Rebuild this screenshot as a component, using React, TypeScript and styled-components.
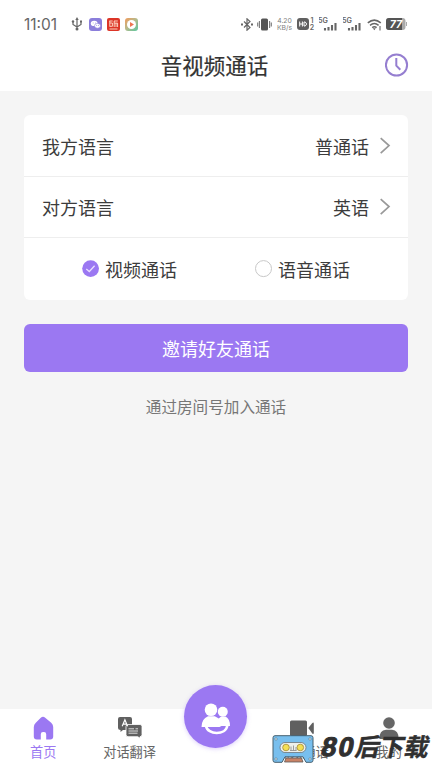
import React from "react";
import styled, { createGlobalStyle } from "styled-components";

const PURPLE = "#9b78f2";

const GlobalStyle = createGlobalStyle`
  * { box-sizing: border-box; }
  body { margin: 0; background: #f5f5f5; }
  button { font: inherit; border: 0; padding: 0; background: none; color: inherit; }
`;

const Screen = styled.div`
  width: 432px;
  height: 768px;
  overflow: hidden;
  display: flex;
  flex-direction: column;
  background: #f5f5f5;
  color: #3c3c3c;
  font-family: "Noto Sans CJK SC", sans-serif;
`;

const StatusBar = styled.div`
  height: 48px;
  padding: 0 25px 0 24px;
  display: flex;
  align-items: center;
  background: #fff;
  color: #666;
  font-family: Inter, sans-serif;
`;

const Time = styled.span`
  width: 47px;
  font-size: 15.5px;
  line-height: 22px;
  padding-top: 1px;
`;

const StatusIcons = styled.div`
  display: flex;
  align-items: center;
  gap: 5px;
  svg { display: block; }
  svg:first-child { margin-right: 1px; }
`;

const SignalIcons = styled.div`
  margin-left: auto;
  display: flex;
  align-items: center;
  gap: 4px;
  svg { display: block; flex: none; }
`;

const Speed = styled.div`
  width: 17px;
  display: grid;
  grid-template-rows: 7px 7px;
  justify-items: center;
  font-size: 6.8px;
  line-height: 7px;
  white-space: nowrap;
  color: #808080;
`;

const Header = styled.header`
  height: 43px;
  padding: 0 23px;
  display: grid;
  grid-template-columns: 24px 1fr 24px;
  align-items: start;
  background: #fff;
  svg { display: block; margin-top: 5px; }
`;

const Title = styled.h1`
  grid-column: 2;
  margin: 0;
  padding-right: 3px;
  text-align: center;
  font-size: 21.5px;
  line-height: 34px;
  font-weight: 400;
  -webkit-text-stroke: 0.2px #333;
  color: #333;
`;

const Content = styled.main`
  flex: 1;
  padding: 24px 24px 0;
  display: flex;
  flex-direction: column;
`;

const Card = styled.section`
  height: 185px;
  border-radius: 6px;
  background: #fff;
`;

const Row = styled.div`
  height: 61.5px;
  padding: 1px 16px 0 18px;
  display: flex;
  align-items: center;
  border-bottom: 1px solid #eee;
  font-size: 18px;
  line-height: 28px;
  svg { display: block; margin-left: 9px; }
`;

const RowLabel = styled.span`
  flex: 1;
`;

const Choices = styled.div`
  height: 61px;
  padding: 1px 0 0 58px;
  display: flex;
  align-items: center;
  font-size: 18px;
  line-height: 28px;
`;

const Choice = styled.label`
  flex: none;
  width: 173px;
  display: flex;
  align-items: center;
  gap: 6px;
  svg { display: block; }
`;

const Invite = styled.button`
  flex: none;
  height: 48px;
  margin-top: 23.5px;
  border-radius: 6px;
  background: ${PURPLE};
  color: #fff;
  font-size: 18px;
  line-height: 46px;
`;

const JoinLink = styled.button`
  margin-top: 22px;
  align-self: center;
  color: #777;
  font-size: 15.6px;
  line-height: 24px;
`;

const TabBar = styled.nav`
  position: relative;
  height: 59px;
  display: grid;
  grid-template-columns: repeat(5, 1fr);
  background: #fff;
`;

const Tab = styled.div<{ $active?: boolean }>`
  padding-top: 7px;
  display: flex;
  flex-direction: column;
  align-items: center;
  color: ${(p) => (p.$active ? PURPLE : "#666")};
  font-size: 13.2px;
  line-height: 20px;
  white-space: nowrap;
  svg { display: block; height: 25px; margin-bottom: 1px; }
`;

const CallButton = styled.div`
  width: 63px;
  height: 63px;
  margin: -24px auto 0;
  border-radius: 50%;
  background: ${PURPLE};
  box-shadow: 0 1px 4px rgba(155, 120, 242, 0.35);
  svg { display: block; }
`;

const Watermark = styled.div`
  position: absolute;
  left: 272px;
  top: 25px;
  display: flex;
  align-items: flex-start;
  svg { display: block; margin-top: 1px; }
`;

const WatermarkText = styled.div`
  margin-left: 8px;
  display: flex;
  transform: skewX(-12deg);
  color: #303030;
  font-weight: 700;
  font-size: 24.5px;
  line-height: 24px;
  white-space: nowrap;
  -webkit-text-stroke: 0.4px #303030;
`;

const WatermarkDigits = styled.span`
  font-family: "Liberation Sans", sans-serif;
  font-weight: 700;
  font-size: 27px;
  line-height: 26px;
  width: 34px;
  letter-spacing: 2px;
  -webkit-text-stroke: 1px #303030;
`;

const UsbIcon = () => (
  <svg width="12" height="14" viewBox="0 0 12 14" fill="none" stroke="#666" strokeWidth="1.2">
    <path d="M6 2v10M2 5v2.5l4 2.5 4-2.5V4.5" />
    <path d="M6 0 4.3 3h3.4z" fill="#666" stroke="none" />
    <circle cx="6" cy="12" r="1.5" fill="#666" stroke="none" />
    <circle cx="2" cy="4.5" r="1.2" fill="#666" stroke="none" />
    <path d="M9 3.5h2v2H9z" fill="#666" stroke="none" />
  </svg>
);

const ChatAppIcon = () => (
  <svg width="13" height="13" viewBox="0 0 13 13">
    <rect width="13" height="13" rx="3" fill="#8b7edb" />
    <ellipse cx="5.2" cy="5.4" rx="3.4" ry="2.7" fill="#fff" />
    <ellipse cx="8.5" cy="7.8" rx="3" ry="2.4" fill="#fff" stroke="#8b7edb" strokeWidth=".6" />
    <path d="M7.3 7.5h.8M9.1 7.5h.8M3.8 5h.7M6 5h.7" stroke="#8b7edb" strokeWidth=".8" />
  </svg>
);

const RedAppIcon = () => (
  <svg width="13" height="13" viewBox="0 0 13 13" fill="none">
    <rect width="13" height="13" rx="2" fill="#dc3527" />
    <path d="M2.3 3h3.4M2.8 3v5.8M2.8 5h2.6v3.3H3M7 3h3.8M7.2 3v6M7.2 5.1h3.4V9M9 5v4M2.5 11h8" stroke="#ffe1cf" strokeWidth=".9" />
  </svg>
);

const PlayAppIcon = () => (
  <svg width="13" height="13" viewBox="0 0 13 13">
    <defs>
      <linearGradient id="play" x1="0" y1="0" x2="1" y2="1">
        <stop offset="0" stopColor="#f39a5a" />
        <stop offset=".45" stopColor="#b9b98a" />
        <stop offset="1" stopColor="#58c7a1" />
      </linearGradient>
    </defs>
    <rect width="13" height="13" rx="3" fill="url(#play)" />
    <circle cx="6.5" cy="6.5" r="4.5" fill="#fff" />
    <path d="M5 4v5l4-2.5z" fill="#ee7552" />
  </svg>
);

const BluetoothIcon = () => (
  <svg width="12" height="13" viewBox="0 0 12 13" fill="none" stroke="#666" strokeWidth="1.2">
    <path d="m3 3.5 6 6-3 2.7V.8l3 2.7-6 6" />
    <path d="M0 6.5h2M10 6.5h2" strokeWidth="1.8" />
  </svg>
);

const VibrateIcon = () => (
  <svg width="15" height="13" viewBox="0 0 15 13">
    <rect x="4" y=".5" width="7" height="12" rx="1.5" fill="#555" />
    <path d="M2.4 3v7M12.6 3v7M.7 4.5v4M14.3 4.5v4" stroke="#777" strokeWidth="1.1" />
  </svg>
);

const HdIcon = () => (
  <svg width="18" height="14" viewBox="0 0 18 14">
    <rect x="0" y="1" width="12" height="12" rx="3" fill="#606060" />
    <path d="M2.7 4.5v5M5.4 4.5v5M2.7 7h2.7M7 5h1l1.3 1v2L8 9H7z" fill="none" stroke="#fff" strokeWidth="1" />
    <text x="13.5" y="6" fontSize="7" fontWeight="600" fill="#666">1</text>
    <text x="12.8" y="13" fontSize="7" fontWeight="600" fill="#666">2</text>
  </svg>
);

const MobileSignalIcon = () => (
  <svg width="20" height="16" viewBox="0 0 20 16">
    <text x="-1" y="7" fontSize="7.2" fontWeight="600" fill="#666">5G</text>
    <path d="M6 12v2.5M9.5 11v3.5M13 9v5.5M16.5 7v7.5" stroke="#666" strokeWidth="2.1" />
  </svg>
);

const WifiIcon = () => (
  <svg width="15" height="13" viewBox="0 0 15 13" fill="none" stroke="#666" strokeWidth="1.5">
    <path d="M.8 4.8q6.5-5.4 13 0M3 7.3q4.3-3.6 8.6 0M5.2 9.6q2.2-1.8 4.4 0" />
    <path d="m7.3 12.3-1.5-2h3z" fill="#666" stroke="none" />
    <path d="M13 8v4.5" strokeWidth="1.1" />
  </svg>
);

const BatteryIcon = () => (
  <svg width="21" height="12" viewBox="0 0 21 12">
    <rect width="19.5" height="12" rx="3" fill="#aaa" />
    <path d="M3 0h13v12H3q-3 0-3-3V3q0-3 3-3z" fill="#555" />
    <path d="M20.5 4v4" stroke="#aaa" />
    <text x="3.7" y="9.8" fontSize="10.5" fontWeight="700" fontStyle="italic" fill="#fff">77</text>
  </svg>
);

const ClockIcon = () => (
  <svg width="24" height="24" viewBox="0 0 24 24" fill="none" stroke="#957ed0" strokeWidth="2">
    <circle cx="11.5" cy="12" r="10.6" />
    <path d="M11.3 5v7.6l4 4.2" />
  </svg>
);

const Chevron = () => (
  <svg width="14" height="20" viewBox="0 0 14 20" fill="none" stroke="#999" strokeWidth="1.7">
    <path d="m2.7 2.2 8.3 7.4-8.3 7.6" />
  </svg>
);

const RadioMark = ({ checked }: { checked?: boolean }) => (
  <svg width="17" height="18" viewBox="0 0 17 18" fill="none">
    {checked ? (
      <>
        <circle cx="8.6" cy="8.6" r="8.4" fill={PURPLE} />
        <path d="m4.3 9 3 2.5 5.3-5.7" stroke="#e8ddff" strokeWidth="1.3" />
      </>
    ) : (
      <circle cx="8.5" cy="8.6" r="8" stroke="#c8c8c8" />
    )}
  </svg>
);

const HomeIcon = () => (
  <svg width="24" height="25" viewBox="0 0 24 25">
    <path d="M9.8 1.7q2.2-1.8 4.4 0l6 5q2 1.7 2 4.2v9.5q0 3-3 3h-4v-5.2q0-2.2-2.2-2.2h-1q-2.2 0-2.2 2.2v5.2h-4q-3 0-3-3v-9.5q0-2.5 2-4.2z" fill={PURPLE} />
  </svg>
);

const TranslateIcon = () => (
  <svg width="26" height="25" viewBox="0 0 26 25">
    <path d="M3 1h10q2 0 2 2v9q0 2-2 2H6l-2.5 2V14Q1 14 1 12V3q0-2 2-2z" fill="#606060" />
    <path d="M11 8.5h12q2 0 2 2v8.2q0 2-2 2v1.6l-2.2-1.6H11q-2 0-2-2v-8.2q0-2 2-2z" fill="#606060" stroke="#fff" strokeWidth=".8" />
    <path d="m5.2 10.3 2.7-6.5 2.7 6.5M6.1 8.2h3.6" fill="none" stroke="#fff" strokeWidth="1.2" />
    <path d="M11.5 12.8h5.5M18.5 12.8h2.5M11.5 15h9.5M11.5 17.2h9" stroke="#ddd" />
  </svg>
);

const CallIcon = () => (
  <svg width="63" height="63" viewBox="0 0 63 63">
    <circle cx="27" cy="24.7" r="6.3" fill="#fff" />
    <circle cx="38.8" cy="26.7" r="5" fill="#fff" />
    <path d="M17.5 42q0-8.2 6.5-10.8h6.8l4 2.2 2.2-1.8h4.5q4.5 2.3 4.5 9.4h-8.500l-2 1z" fill="#fff" />
    <path d="M22 41c1.6 9.2 19.8 9.5 21.3-.4" fill="none" stroke="#fff" strokeWidth="2.6" />
  </svg>
);

const VideoIcon = () => (
  <svg width="26" height="25" viewBox="0 0 26 25" fill="#606060">
    <rect x="1" y="4.5" width="17" height="15.5" rx="1.5" />
    <path d="m19.3 12 4-5q1.5-1.3 1.5.8v8.8q0 2.2-1.5.8z" />
  </svg>
);

const ProfileIcon = () => (
  <svg width="22" height="25" viewBox="0 0 22 25" fill="#666">
    <circle cx="11" cy="7" r="5.8" />
    <path d="M1.3 23q0-9 6.7-9.3h6q6.7.3 6.7 9.3z" />
  </svg>
);

const CassetteIcon = () => (
  <svg width="42" height="28" viewBox="0 0 42 28">
    <path d="M3 .7h36q2 0 2 2v22.6q0 2-2 2h-5l-3-5.5H13l-3 5.5H3q-2 0-2-2V2.7q0-2 2-2z" fill="#78bfee" stroke="#46606f" />
    <path d="m12.5 27 1.5-4h15.5l1.5 4z" fill="#c98265" stroke="#5a5a5a" strokeWidth=".8" />
    <rect x="8" y="7.5" width="26" height="10" rx="5" fill="#eef0eb" stroke="#6c7478" strokeWidth=".8" />
    <circle cx="14" cy="12.5" r="3.3" fill="#f3df55" stroke="#a68b31" strokeWidth=".8" />
    <circle cx="28.3" cy="12.5" r="3.3" fill="#f3df55" stroke="#a68b31" strokeWidth=".8" />
    <path d="M19 11.5v4M21.5 10.5v5M24 12v3.5M18 15.5h6.5" stroke="#888" strokeWidth=".8" />
    <g fill="#dcecf5" stroke="#46606f" strokeWidth=".5">
      <circle cx="4" cy="4" r="1.2" />
      <circle cx="38" cy="4" r="1.2" />
      <circle cx="4" cy="24" r="1.2" />
      <circle cx="38" cy="24" r="1.2" />
    </g>
  </svg>
);

export default function App() {
  return (
    <Screen>
      <GlobalStyle />
      <StatusBar>
        <Time>11:01</Time>
        <StatusIcons>
          <UsbIcon />
          <ChatAppIcon />
          <RedAppIcon />
          <PlayAppIcon />
        </StatusIcons>
        <SignalIcons>
          <BluetoothIcon />
          <VibrateIcon />
          <Speed><span>4.20</span><span>KB/s</span></Speed>
          <HdIcon />
          <MobileSignalIcon />
          <MobileSignalIcon />
          <WifiIcon />
          <BatteryIcon />
        </SignalIcons>
      </StatusBar>
      <Header>
        <Title>音视频通话</Title>
        <ClockIcon />
      </Header>
      <Content>
        <Card>
          <Row>
            <RowLabel>我方语言</RowLabel>
            普通话
            <Chevron />
          </Row>
          <Row>
            <RowLabel>对方语言</RowLabel>
            英语
            <Chevron />
          </Row>
          <Choices>
            <Choice><RadioMark checked />视频通话</Choice>
            <Choice><RadioMark />语音通话</Choice>
          </Choices>
        </Card>
        <Invite>邀请好友通话</Invite>
        <JoinLink>通过房间号加入通话</JoinLink>
      </Content>
      <TabBar>
        <Tab $active><HomeIcon />首页</Tab>
        <Tab><TranslateIcon />对话翻译</Tab>
        <CallButton><CallIcon /></CallButton>
        <Tab><VideoIcon />视频通话</Tab>
        <Tab><ProfileIcon />我的</Tab>
        <Watermark>
          <CassetteIcon />
          <WatermarkText>
            <WatermarkDigits>80</WatermarkDigits>
            后下载
          </WatermarkText>
        </Watermark>
      </TabBar>
    </Screen>
  );
}
